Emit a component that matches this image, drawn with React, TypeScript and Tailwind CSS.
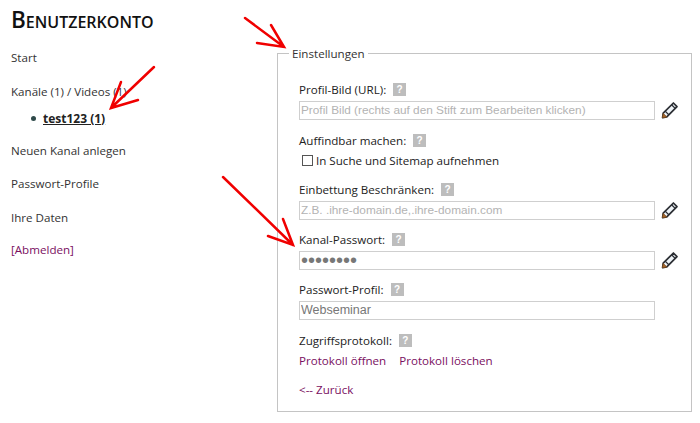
const HelpBadge = () => (
    <span className="ml-[7px] inline-flex size-[13px] items-center justify-center bg-[#bdbdbd] font-['Liberation_Sans',sans-serif] text-[10px] font-bold leading-none text-white">?</span>
);

const Pencil = () => (
    <svg viewBox="0 0 18 18" className="ml-[6px] size-[18px] shrink-0" fill="none">
        <path d="M2.2 12.2 12.4 2 16 5.6 5.8 15.8 1.6 16.6Z" fill="#eef3f7" stroke="#2b2e33" strokeWidth="1.7" strokeLinejoin="round" />
        <path d="M10.6 3.8l3.6 3.6M4.4 10.4l3.4 3.4" stroke="#2b2e33" strokeWidth="1.3" />
        <path d="M2.2 12.4 1.4 16.8 5.8 15.9Z" fill="#a8662a" stroke="#7a4a1c" strokeWidth="0.8" />
    </svg>
);

const Field = ({ label, className, children }: { label: string; className: string; children: React.ReactNode }) => (
    <div className={className}>
        <div className="flex h-[19px] items-center text-[#222]">{label}:<HelpBadge /></div>
        {children}
    </div>
);

const TextInput = ({ value, placeholder, type = "text", pencil = true }: { value?: string; placeholder?: string; type?: string; pencil?: boolean }) => (
    <div className="mt-[1px] flex h-[20px] items-center">
        <input
            readOnly
            type={type}
            value={value}
            placeholder={placeholder}
            className={type === "password"
                ? "h-[19px] w-[356px] border border-[#cfcfcf] bg-white px-[1px] font-['Liberation_Sans',sans-serif] text-[20px] leading-none text-[#777] outline-none"
                : "h-[19px] w-[356px] border border-[#cfcfcf] bg-white px-[1px] font-['Liberation_Sans',sans-serif] text-[12.5px] text-[#777] outline-none placeholder:text-[11.8px] placeholder:text-[#b3b3b3]"}
        />
        {pencil && <Pencil />}
    </div>
);

const Arrows = () => (
    <svg className="absolute inset-0 h-full w-full" viewBox="0 0 700 423" fill="none" stroke="#f00000" strokeWidth="2.5" strokeLinecap="round">
        <path d="M154 67 111 108M121 82 111 108 138 100" />
        <path d="M245 18 284 47M271 25 284 47 257 43" />
        <path d="M223 177 293 245M283 219 293 245 268 236" />
    </svg>
);

export default function App() {
    return (
        <div className="relative flex h-[423px] w-[700px] overflow-hidden bg-white font-['Open_Sans',sans-serif] text-[11.6px]">
            <aside className="w-[277px] shrink-0 pl-[11px] pt-[8px] text-[#333]">
                <h1 className="mb-[17px] h-[24px] text-[22.5px] font-semibold leading-[24px] text-[#111] [font-variant:small-caps]">Benutzerkonto</h1>
                <nav className="flex flex-col">
                    <a className="flex h-[17px] items-center">Start</a>
                    <a className="mt-[17px] flex h-[17px] items-center">Kanäle (1) / Videos (1)</a>
                    <div className="mt-[10px] flex h-[17px] items-center pl-[20px]">
                        <span className="mr-[7px] size-[5px] rounded-full bg-[#2f4a4a]" />
                        <a className="text-[12px] font-bold text-[#222] underline">test123 (1)</a>
                    </div>
                    <a className="mt-[15px] flex h-[17px] items-center">Neuen Kanal anlegen</a>
                    <a className="mt-[16px] flex h-[17px] items-center">Passwort-Profile</a>
                    <a className="mt-[17px] flex h-[17px] items-center">Ihre Daten</a>
                    <a className="mt-[15px] flex h-[17px] items-center text-[#7a0f5f]">[Abmelden]</a>
                </nav>
            </aside>
            <main className="pt-[45px]">
                <fieldset className="h-[367px] w-[415px] border border-[#c4c4c4] pl-[21px] pt-[18px]">
                    <legend className="-ml-[10px] px-[3px] text-[#333]">Einstellungen</legend>
                    <Field label="Profil-Bild (URL)" className="">
                        <TextInput placeholder="Profil Bild (rechts auf den Stift zum Bearbeiten klicken)" />
                    </Field>
                    <Field label="Auffindbar machen" className="mt-[11px]">
                        <label className="flex h-[20px] items-center text-[#222]">
                            <span className="ml-[3px] mr-[3px] size-[11px] border border-[#555] bg-white" />
                            In Suche und Sitemap aufnehmen
                        </label>
                    </Field>
                    <Field label="Einbettung Beschränken" className="mt-[10px]">
                        <TextInput placeholder="Z.B. .ihre-domain.de,.ihre-domain.com" />
                    </Field>
                    <Field label="Kanal-Passwort" className="mt-[10px]">
                        <TextInput type="password" value="12345678" />
                    </Field>
                    <Field label="Passwort-Profil" className="mt-[10px]">
                        <TextInput value="Webseminar" pencil={false} />
                    </Field>
                    <Field label="Zugriffsprotokoll" className="mt-[11px]">
                        <div className="flex h-[20px] items-center gap-[13px] text-[#7a0f5f]">
                            <a>Protokoll öffnen</a>
                            <a>Protokoll löschen</a>
                        </div>
                    </Field>
                    <a className="mt-[11px] block text-[#7a0f5f]">&lt;-- Zurück</a>
                </fieldset>
            </main>
            <Arrows />
        </div>
    );
}
